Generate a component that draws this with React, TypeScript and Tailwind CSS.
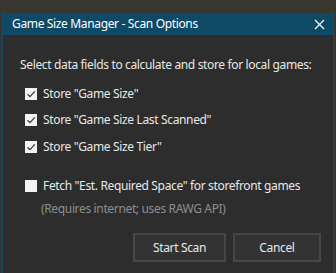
import React from "react";

function Check({ checked }: { checked: boolean }) {
  return (
    <div className="w-[12px] h-[12px] bg-[#f3f3f3] flex items-center justify-center shrink-0">
      {checked && (
        <svg width="10" height="10" viewBox="0 0 10 10">
          <path d="M1.5 5.2 L4 7.6 L8.8 2.4" fill="none" stroke="#3a3a3a" strokeWidth="1.3" />
        </svg>
      )}
    </div>
  );
}

function Row({ checked, label }: { checked: boolean; label: string }) {
  return (
    <div className="h-[26px] flex items-center pl-[22px]">
      <Check checked={checked} />
      <span className="ml-[6px] text-[#e8e8e8]">{label}</span>
    </div>
  );
}

export default function App() {
  return (
    <div
      className="w-[336px] h-[273px] bg-[#37362f] pt-[13px] pl-[2px] overflow-hidden text-[12px] leading-[16px] tracking-[-0.35px]"
      style={{ fontFamily: '"Noto Sans", sans-serif' }}
    >
      <div className="w-[332px] h-[260px] border-l border-r border-[#14506e] bg-[#2d2d2d] flex flex-col">
        <div className="h-[22px] bg-[#0e4a66] flex items-center justify-between pl-[9px] pr-[8px] shrink-0">
          <span className="text-white">Game Size Manager - Scan Options</span>
          <svg width="11" height="11" viewBox="0 0 11 11">
            <path d="M1 1 L10 10 M10 1 L1 10" stroke="#ffffff" strokeWidth="1.2" />
          </svg>
        </div>
        <div className="flex flex-col pt-[22px]">
          <div className="h-[16px] pl-[17px] text-[#e8e8e8]">
            Select data fields to calculate and store for local games:
          </div>
          <div className="h-[8px]" />
          <Row checked label={'Store "Game Size"'} />
          <Row checked label={'Store "Game Size Last Scanned"'} />
          <div className="h-[27px] flex items-center pl-[22px]">
            <Check checked />
            <span className="ml-[6px] text-[#e8e8e8]">{'Store "Game Size Tier"'}</span>
          </div>
          <div className="h-[13px]" />
          <Row checked={false} label={'Fetch "Est. Required Space" for storefront games'} />
          <div className="h-[16px] mt-[2px] pl-[38px] text-[#8e8e8e]">
            (Requires internet; uses RAWG API)
          </div>
          <div className="flex justify-end gap-[7px] pr-[12px] mt-[16px]">
            <button className="w-[93px] h-[29px] bg-[#333333] border-2 border-[#474747] text-[#e8e8e8]">
              Start Scan
            </button>
            <button className="w-[88px] h-[29px] bg-[#333333] border-2 border-[#474747] text-[#e8e8e8]">
              Cancel
            </button>
          </div>
        </div>
      </div>
    </div>
  );
}
